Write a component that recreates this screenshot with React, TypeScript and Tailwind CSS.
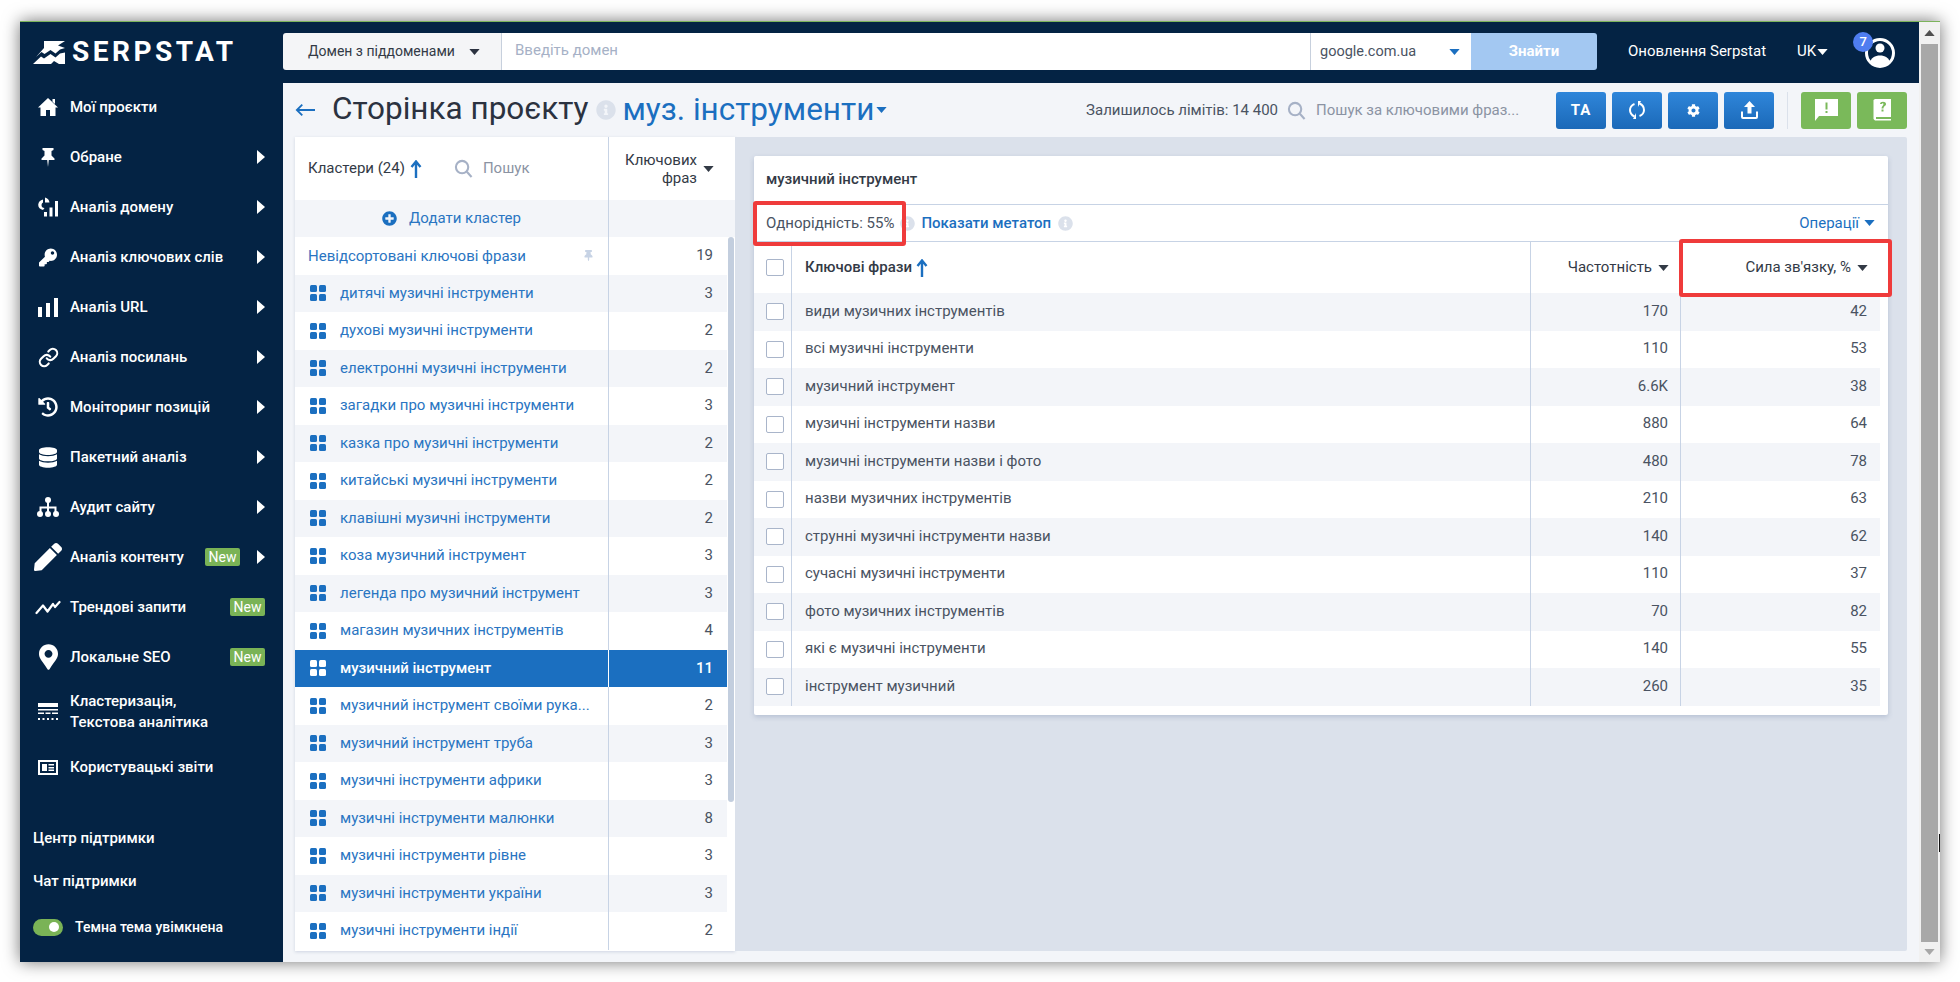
import React from 'react';
import {
  FaKey,
  FaHistory,
  FaDatabase,
  FaPen,
  FaMapMarkerAlt,
  FaCog,
  FaInfoCircle,
  FaPlusCircle,
  FaThumbtack,
} from 'react-icons/fa';
import { Link as LinkIcon } from 'lucide-react';

const Caret = ({ className = '' }: { className?: string }) => (
  <svg viewBox="0 0 12 7" className={`w-[11px] h-[6px] shrink-0 ${className}`} fill="currentColor">
    <path d="M0 0h12L6 7z" />
  </svg>
);

const SortUp = () => (
  <svg viewBox="0 0 12 18" className="w-[12px] h-[18px] text-[#1b6fc0] shrink-0" fill="none" stroke="currentColor" strokeWidth="2.400">
    <path d="M6 18V2M1.500 7 6 1.500 10.500 7" />
  </svg>
);

const Search = ({ className = '' }: { className?: string }) => (
  <svg viewBox="0 0 20 20" className={`w-[19px] h-[19px] shrink-0 text-[#a6b1c6] ${className}`} fill="none" stroke="currentColor" strokeWidth="2.200">
    <circle cx="8.500" cy="8.500" r="6.500" />
    <path d="m13.500 13.500 5 5.500" />
  </svg>
);

const GridIcon = () => (
  <svg viewBox="0 0 16 16" className="w-[16px] h-[16px] shrink-0" fill="currentColor">
    <rect x="0" y="0" width="7" height="7" rx="1.500" />
    <rect x="9" y="0" width="7" height="7" rx="1.500" />
    <rect x="0" y="9" width="7" height="7" rx="1.500" />
    <rect x="9" y="9" width="7" height="7" rx="1.500" />
  </svg>
);

const HomeIcon = () => (
  <svg viewBox="0 0 20 18" className="w-[20px] h-[18px]" fill="currentColor">
    <path d="M10 0l10 9.500h-2.500V18H12v-6H8v6H2.500V9.500H0z" />
    <path d="M14.500 1h2.500v5l-2.500-2.300z" />
  </svg>
);

const PinIcon = () => (
  <svg viewBox="0 0 16 19" className="w-[16px] h-[19px]" fill="currentColor">
    <path d="M2.500 0h11v2l-2 1v4.500l3 3V12H8.800L8 19l-.8-7H1.500v-1.500l3-3V3l-2-1z" />
  </svg>
);

const DomainIcon = () => (
  <svg viewBox="0 0 20 20" className="w-[20px] h-[20px]" fill="currentColor">
    <path d="M5 2.500A6 6 0 0 0 .2 7.700c0 2.800 2 4.800 4.800 5.200l1.500-2a3 3 0 0 1-3-3 3 3 0 0 1 1.500-2.500z" />
    <path d="M7 .5a6 6 0 0 1 4.500 5H7z" />
    <rect x="6" y="15" width="3" height="4.500" />
    <rect x="11.500" y="10.500" width="3" height="9" />
    <rect x="17" y="4" width="3" height="15.500" />
  </svg>
);

const BarsIcon = () => (
  <svg viewBox="0 0 20 19" className="w-[20px] h-[19px]" fill="currentColor">
    <rect x="0" y="9" width="4" height="10" />
    <rect x="8" y="5" width="4" height="14" />
    <rect x="16" y="0" width="4" height="19" />
  </svg>
);

const SitemapIcon = () => (
  <svg viewBox="0 0 22 20" className="w-[22px] h-[20px]" fill="currentColor">
    <circle cx="11" cy="3" r="3" />
    <circle cx="3" cy="17" r="3" />
    <circle cx="11" cy="17" r="3" />
    <circle cx="19" cy="17" r="3" />
    <path d="M10 5h2v4.500h7.500V15h-2v-3.500H12V15h-2v-3.500H4.500V15h-2V9.500H10z" />
  </svg>
);

const TrendIcon = () => (
  <svg viewBox="0 0 26 15" className="w-[26px] h-[15px]" fill="none" stroke="currentColor" strokeWidth="2.200" strokeLinecap="round" strokeLinejoin="round">
    <path d="M1.500 13 8 5.500l4.500 6L18 4l2 3 4.500-5" />
  </svg>
);

const ClusterIcon = () => (
  <svg viewBox="0 0 20 18" className="w-[20px] h-[18px]" fill="currentColor">
    <rect x="0" y="0" width="20" height="4" />
    <rect x="0" y="6" width="20" height="1.500" />
    <rect x="0" y="9.500" width="6" height="1.500" />
    <rect x="7.500" y="9.500" width="5" height="1.500" />
    <rect x="14" y="9.500" width="6" height="1.500" />
    <path d="M0 15h2v2H0zm4.500 0h2v2h-2zm4.500 0h2v2H9zm4.500 0h2v2h-2zm4.500 0h2v2h-2z" />
  </svg>
);

const ReportIcon = () => (
  <svg viewBox="0 0 20 15" className="w-[20px] h-[15px]" fill="currentColor">
    <path fillRule="evenodd" d="M0 0h20v15H0zm2 2v11h16V2z" />
    <rect x="4" y="4" width="5" height="7" />
    <rect x="10.500" y="4" width="5.500" height="1.500" />
    <rect x="10.500" y="7" width="5.500" height="1.500" />
    <rect x="10.500" y="9.500" width="5.500" height="1.500" />
  </svg>
);

const AvatarIcon = () => (
  <svg viewBox="0 0 30 30" className="w-[30px] h-[30px]" fill="currentColor">
    <circle cx="15" cy="15" r="13.500" fill="none" stroke="currentColor" strokeWidth="3" />
    <circle cx="15" cy="10" r="4.500" />
    <path d="M5 24.500C6 20 10 17.500 15 17.500s9 2.500 10 7c-2.500 2.500-6 4-10 4s-7.500-1.500-10-4z" />
  </svg>
);

const NewBadge = () => (
  <span className="bg-[#7ab356] text-white text-[14px] leading-[18px] h-[18px] w-[35px] text-center rounded-[2px] shrink-0">New</span>
);

type NavItem = { label: string; icon: React.ReactNode; arrow?: boolean; isNew?: boolean };

const navItems: NavItem[] = [
  { label: 'Мої проєкти', icon: <HomeIcon /> },
  { label: 'Обране', icon: <PinIcon />, arrow: true },
  { label: 'Аналіз домену', icon: <DomainIcon />, arrow: true },
  { label: 'Аналіз ключових слів', icon: <FaKey className="w-[18px] h-[19px]" />, arrow: true },
  { label: 'Аналіз URL', icon: <BarsIcon />, arrow: true },
  { label: 'Аналіз посилань', icon: <LinkIcon className="w-[21px] h-[21px]" strokeWidth={2.400} />, arrow: true },
  { label: 'Моніторинг позицій', icon: <FaHistory className="w-[20px] h-[20px]" />, arrow: true },
  { label: 'Пакетний аналіз', icon: <FaDatabase className="w-[18px] h-[21px]" />, arrow: true },
  { label: 'Аудит сайту', icon: <SitemapIcon />, arrow: true },
  { label: 'Аналіз контенту', icon: <FaPen className="w-[28px] h-[28px]" />, arrow: true, isNew: true },
  { label: 'Трендові запити', icon: <TrendIcon />, isNew: true },
  { label: 'Локальне SEO', icon: <FaMapMarkerAlt className="w-[19px] h-[30px]" />, isNew: true },
];

const clusters: [string, number][] = [
  ['дитячі музичні інструменти', 3],
  ['духові музичні інструменти', 2],
  ['електронні музичні інструменти', 2],
  ['загадки про музичні інструменти', 3],
  ['казка про музичні інструменти', 2],
  ['китайські музичні інструменти', 2],
  ['клавішні музичні інструменти', 2],
  ['коза музичний інструмент', 3],
  ['легенда про музичний інструмент', 3],
  ['магазин музичних інструментів', 4],
  ['музичний інструмент', 11],
  ['музичний інструмент своїми рука...', 2],
  ['музичний інструмент труба', 3],
  ['музичні інструменти африки', 3],
  ['музичні інструменти малюнки', 8],
  ['музичні інструменти рівне', 3],
  ['музичні інструменти україни', 3],
  ['музичні інструменти індії', 2],
];

const keywords: [string, string, number][] = [
  ['види музичних інструментів', '170', 42],
  ['всі музичні інструменти', '110', 53],
  ['музичний інструмент', '6.6K', 38],
  ['музичні інструменти назви', '880', 64],
  ['музичні інструменти назви і фото', '480', 78],
  ['назви музичних інструментів', '210', 63],
  ['струнні музичні інструменти назви', '140', 62],
  ['сучасні музичні інструменти', '110', 37],
  ['фото музичних інструментів', '70', 82],
  ['які є музичні інструменти', '140', 55],
  ['інструмент музичний', '260', 35],
];

const Checkbox = () => (
  <span className="block w-[18px] h-[17px] bg-white border border-[#a9b5ca] rounded-[2px]" />
);

const Sidebar = () => (
  <aside className="w-[263px] shrink-0 bg-[#042344] text-white flex flex-col">
    <div className="h-[60px] pl-[13px] flex items-center gap-[7px] shrink-0">
      <svg viewBox="0 0 32 23" className="w-[32px] h-[23px]" fill="currentColor">
        <path d="M11 0h21l-7 4.500L32 7l-5 1.500-4.500 4-5-3.500-6 4-3-2L3 16 11 7z" />
        <path d="M0 23l8-7.500 3 2 6.500-4.500 5 3.500 4.500-4 5-1V23h-6l-5-3-3 3z" />
      </svg>
      <span className="text-[28px] leading-[30px] font-bold tracking-[3.500px]">SERPSTAT</span>
    </div>
    <nav className="flex flex-col">
      {navItems.map((item) => (
        <div key={item.label} className="h-[50px] flex items-center pr-[18px]">
          <span className="w-[56px] flex justify-center shrink-0">{item.icon}</span>
          <span className="text-[15px] font-medium ml-[-6px] whitespace-nowrap">{item.label}</span>
          <span className="ml-auto flex items-center gap-[17px]">
            {item.isNew && <NewBadge />}
            {item.arrow && (
              <svg viewBox="0 0 8 14" className="w-[8px] h-[14px]" fill="currentColor">
                <path d="M0 0l8 7-8 7z" />
              </svg>
            )}
          </span>
        </div>
      ))}
      <div className="h-[60px] flex items-center">
        <span className="w-[56px] flex justify-center shrink-0"><ClusterIcon /></span>
        <span className="text-[15px] font-medium leading-[21px] ml-[-6px]">
          Кластеризація,
          <br />
          Текстова аналітика
        </span>
      </div>
      <div className="h-[50px] flex items-center">
        <span className="w-[56px] flex justify-center shrink-0"><ReportIcon /></span>
        <span className="text-[15px] font-medium ml-[-6px]">Користувацькі звіти</span>
      </div>
    </nav>
    <div className="mt-[24px] pl-[13px] text-[15px] font-medium flex flex-col">
      <div className="h-[44px] flex items-center">Центр підтримки</div>
      <div className="h-[43px] flex items-center">Чат підтримки</div>
      <div className="h-[46px] mt-[1px] flex items-center gap-[12px]">
        <span className="w-[30px] h-[17px] rounded-full bg-[#7ab356] flex items-center justify-end pr-[4px]">
          <span className="w-[10px] h-[10px] rounded-full bg-white" />
        </span>
        <span className="text-[14px]">Темна тема увімкнена</span>
      </div>
    </div>
  </aside>
);

const Header = () => (
  <header className="h-[61px] bg-[#042344] flex items-center text-white shrink-0 pb-[2px]">
    <div className="h-[37px] flex w-[1314px] shrink-0 text-[15px]">
      <div className="w-[219px] bg-[#f4f5f7] rounded-l-[3px] border-r border-[#c7d0dd] flex items-center gap-[14px] pl-[25px] text-[14px] text-[#333a46] shrink-0">
        <span className="whitespace-nowrap">Домен з піддоменами</span>
        <Caret className="text-[#2b3240]" />
      </div>
      <div className="w-[808px] bg-white flex items-center pl-[13px] text-[#a6b1c6] shrink-0 pb-[2px]">Введіть домен</div>
      <div className="w-[161px] bg-white border-l border-[#c7d0dd] flex items-center justify-between pl-[9px] pr-[11px] text-[14.500px] text-[#4a5362] shrink-0">
        google.com.ua
        <Caret className="text-[#1b6fc0]" />
      </div>
      <div className="w-[126px] bg-[#a3c8f2] rounded-r-[3px] flex items-center justify-center font-bold text-white shrink-0">Знайти</div>
    </div>
    <span className="text-[15px] ml-[31px] whitespace-nowrap">Оновлення Serpstat</span>
    <span className="text-[15px] ml-[31px] flex items-center gap-[1px]">
      UK
      <Caret />
    </span>
    <span className="relative ml-[37px] w-[30px] h-[30px] mt-[2px]">
      <AvatarIcon />
      <span className="absolute -left-[12px] -top-[6px] w-[20px] h-[20px] rounded-full bg-[#4f7df0] text-[13px] font-medium leading-[20px] text-center">7</span>
    </span>
  </header>
);

const ToolBtn = ({ children, green }: { children: React.ReactNode; green?: boolean }) => (
  <span
    className={`w-[50px] h-[37px] rounded-[3px] flex items-center justify-center text-white shrink-0 ${
      green ? 'bg-[#7ab95a]' : 'bg-gradient-to-b from-[#2f86da] to-[#1b69b8]'
    }`}
  >
    {children}
  </span>
);

const TitleRow = () => (
  <div className="h-[54px] flex items-center pl-[12px] shrink-0 pr-[12px]">
    <svg viewBox="0 0 22 14" className="w-[20px] h-[14px] text-[#1b6fc0] shrink-0" fill="none" stroke="currentColor" strokeWidth="2">
      <path d="M22 7H2M8 1 2 7l6 6" />
    </svg>
    <h1 className="ml-[17px] text-[31.500px] leading-[34px] text-[#2b3240] whitespace-nowrap pb-[3px]">Сторінка проєкту</h1>
    <FaInfoCircle className="w-[20px] h-[20px] ml-[7px] text-[#dbe1eb] shrink-0" />
    <span className="ml-[7px] text-[31.500px] leading-[34px] text-[#1b6fc0] whitespace-nowrap">муз. інструменти</span>
    <Caret className="text-[#1b6fc0] ml-[2px] w-[10px] h-[5px]" />
    <span className="ml-auto text-[15px] text-[#4a5362] whitespace-nowrap">Залишилось лімітів: 14 400</span>
    <Search className="ml-[9px]" />
    <span className="ml-[10px] w-[240px] text-[15px] text-[#8b93a3] whitespace-nowrap">Пошук за ключовими фраз...</span>
    <div className="flex gap-[6px] items-center">
      <ToolBtn><span className="font-bold text-[15px] tracking-[1px]">TA</span></ToolBtn>
      <ToolBtn>
        <svg viewBox="0 0 16 18" className="w-[16px] h-[18px]" fill="none" stroke="currentColor" strokeWidth="2">
          <path d="M5.500 15.500C2 14 1 11 1 9s1.500-5 4.500-6M10.500 2.500C14 4 15 7 15 9s-1.500 5-4.500 6" />
          <path d="M9 0v6l3-6zM7 18v-6l-3 6z" fill="currentColor" stroke="none" />
        </svg>
      </ToolBtn>
      <ToolBtn><FaCog className="w-[13px] h-[13px]" /></ToolBtn>
      <ToolBtn>
        <svg viewBox="0 0 17 18" className="w-[17px] h-[18px]" fill="currentColor">
          <path d="M8.500 0 14 6h-3.500v6.500h-4V6H3z" />
          <path d="M1 10.500v5.500a1 1 0 0 0 1 1h13a1 1 0 0 0 1-1v-5.500" fill="none" stroke="currentColor" strokeWidth="2" />
        </svg>
      </ToolBtn>
      <span className="w-px h-[37px] bg-[#dbe1eb] mx-[7px]" />
      <ToolBtn green>
        <svg viewBox="0 0 23 22" className="w-[23px] h-[22px]" fill="currentColor">
          <path fillRule="evenodd" d="M0 0h23v17H4l-4 5zm10.500 3.500v7h2v-7zm0 8.500v2h2v-2z" />
        </svg>
      </ToolBtn>
      <ToolBtn green>
        <svg viewBox="0 0 19 23" className="w-[19px] h-[23px]" fill="currentColor">
          <path fillRule="evenodd" d="M2 0h16v18H3v2h15v1.500H2L.5 20V1zm5 5c0-3 6-3 6 0 0 2-2.500 2-2.500 4.500h-2c0-2.500 2-3 2-4.500 0-1-1.500-1-1.700 0zm1.500 5.500v2h2v-2z" />
        </svg>
      </ToolBtn>
    </div>
  </div>
);

const ClusterPanel = () => (
  <section className="w-[440px] shrink-0 bg-white h-[814px] flex flex-col shadow-[0_1px_3px_rgba(100,120,160,0.25)] text-[15px]">
    <div className="h-[63px] flex shrink-0">
      <div className="w-[314px] border-r border-[#c7d3e5] flex items-center pl-[13px] text-[#333a46]">
        <span className="whitespace-nowrap">Кластери (24)</span>
        <span className="ml-[5px]"><SortUp /></span>
        <Search className="ml-[32px]" />
        <span className="ml-[10px] text-[#8b93a3]">Пошук</span>
      </div>
      <div className="flex-1 flex items-center text-[#333a46] pl-[11px]">
        <span className="text-right leading-[18px] w-[77px]">Ключових фраз</span>
        <Caret className="ml-[6px]" />
      </div>
    </div>
    <div className="h-[37px] flex shrink-0 bg-[#f3f5f9]">
      <div className="w-[314px] border-r border-[#c7d3e5] flex items-center justify-center gap-[12px] text-[#2a75c2]">
        <FaPlusCircle className="w-[15px] h-[15px] text-[#1b6fc0]" />
        Додати кластер
      </div>
    </div>
    <div className="flex flex-1 min-h-0">
      <div className="w-[432px] shrink-0 flex flex-col">
        <div className="h-[37.500px] flex items-center shrink-0">
          <div className="w-[314px] h-full border-r border-[#c7d3e5] flex items-center pl-[13px] pr-[15px] text-[#2a75c2]">
            <span className="whitespace-nowrap">Невідсортовані ключові фрази</span>
            <FaThumbtack className="ml-auto w-[9px] h-[11px] text-[#c7d3e5]" />
          </div>
          <span className="flex-1 text-right pr-[14px] text-[#4a5362] pb-[2px]">19</span>
        </div>
        {clusters.map(([name, count], i) => {
          const active = name === 'музичний інструмент';
          const bg = active ? 'bg-[#1b6fc0]' : i % 2 === 0 ? 'bg-[#f3f5f9]' : 'bg-white';
          return (
            <div key={name} className={`h-[37.500px] flex items-center shrink-0 ${bg}`}>
              <div className={`w-[314px] h-full border-r flex items-center pl-[15px] gap-[14px] ${active ? 'border-white text-white font-medium' : 'border-[#c7d3e5] text-[#2a75c2]'}`}>
                <span className={active ? 'text-white' : 'text-[#1b6fc0]'}><GridIcon /></span>
                <span className="whitespace-nowrap pb-[1px]">{name}</span>
              </div>
              <span className={`flex-1 text-right pr-[14px] pb-[1px] ${active ? 'text-white font-medium' : 'text-[#4a5362]'}`}>{count}</span>
            </div>
          );
        })}
      </div>
      <div className="flex-1 pl-[1px] pr-[1px]">
        <div className="h-[565px] bg-[#c3cede] rounded-full" />
      </div>
    </div>
  </section>
);

const KeywordCard = () => (
  <div className="relative w-[1134px] h-[559px] bg-white rounded-[2px] shadow-[0_2px_5px_rgba(100,120,160,0.3)] text-[15px] text-[#4a5362]">
    <div className="h-[49px] border-b border-[#c7d3e5] flex items-center pl-[12px] pb-[2px] font-medium text-[#333a46]">музичний інструмент</div>
    <div className="h-[37px] border-b border-[#c7d3e5] flex items-center pl-[12px] pr-[13px]">
      <span className="whitespace-nowrap">Однорідність: 55%</span>
      <FaInfoCircle className="w-[15px] h-[15px] ml-[6px] text-[#dbe1eb]" />
      <span className="ml-[6px] font-medium text-[#1b6fc0] whitespace-nowrap">Показати метатоп</span>
      <FaInfoCircle className="w-[15px] h-[15px] ml-[7px] text-[#dbe1eb]" />
      <span className="ml-auto text-[#1b6fc0] flex items-center gap-[5px]">
        Операції
        <Caret className="text-[#1b6fc0]" />
      </span>
    </div>
    <div className="h-[51px] grid grid-cols-[38px_739px_150px_199px] text-[#333a46]">
      <div className="flex items-center justify-center border-r border-[#c7d3e5] pl-[4px]"><Checkbox /></div>
      <div className="flex items-center pl-[13px] gap-[4px] font-medium border-r border-[#c7d3e5]">
        Ключові фрази
        <SortUp />
      </div>
      <div className="flex items-center justify-end gap-[6px] pr-[11px] border-r border-[#c7d3e5]">
        Частотність
        <Caret />
      </div>
      <div className="flex items-center justify-end gap-[6px] pr-[12px]">
        Сила зв'язку, %
        <Caret />
      </div>
    </div>
    {keywords.map(([name, freq, strength], i) => (
      <div key={name} className={`h-[37.500px] w-[1126px] grid grid-cols-[38px_739px_150px_199px] ${i % 2 === 0 ? 'bg-[#f3f5f9]' : 'bg-white'}`}>
        <div className="flex items-center justify-center border-r border-[#c7d3e5] pl-[4px]"><Checkbox /></div>
        <div className="flex items-center pl-[13px] pb-[2px] border-r border-[#c7d3e5]">{name}</div>
        <div className="flex items-center justify-end pr-[12px] pb-[2px] border-r border-[#c7d3e5]">{freq}</div>
        <div className="flex items-center justify-end pr-[13px] pb-[2px]">{strength}</div>
      </div>
    ))}
    {/* callouts drawn over the screenshot */}
    <div className="absolute left-[-1px] top-[45px] w-[153px] h-[45px] border-[4px] border-[#ef3b3b] rounded-[3px]" />
    <div className="absolute left-[925px] top-[83px] w-[213px] h-[58px] border-[4px] border-[#ef3b3b] rounded-[3px]" />
  </div>
);

const Scrollbar = () => (
  <div className="w-[21px] shrink-0 bg-[#f1f1f1] flex flex-col items-center">
    <div className="h-[22px] flex items-center justify-center shrink-0">
      <Caret className="rotate-180 text-[#505050]" />
    </div>
    <div className="w-[17px] flex-1 bg-[#a8a8a8]" />
    <div className="h-[20px] flex items-center justify-center shrink-0">
      <Caret className="text-[#a8a8a8]" />
    </div>
  </div>
);

export default function App() {
  return (
    <div className="w-[1960px] h-[982px] bg-white pl-[20px] pt-[21px] overflow-hidden font-['Roboto',sans-serif]">
      <div className="relative w-[1920px] h-[941px] flex border-t border-[#7cb35c] shadow-[0_0_16px_rgba(0,0,0,0.55)]">
        <Sidebar />
        <div className="w-[1636px] shrink-0 flex flex-col bg-[#f3f5f9]">
          <Header />
          <TitleRow />
          <div className="flex pl-[12px]">
            <ClusterPanel />
            <div className="w-[1172px] h-[814px] bg-[#dbe1eb] pl-[19px] pt-[19px] rounded-r-[2px]">
              <KeywordCard />
            </div>
          </div>
        </div>
        <Scrollbar />
        <span className="absolute right-0 top-[812px] w-px h-[18px] bg-[#111]" />
      </div>
    </div>
  );
}
